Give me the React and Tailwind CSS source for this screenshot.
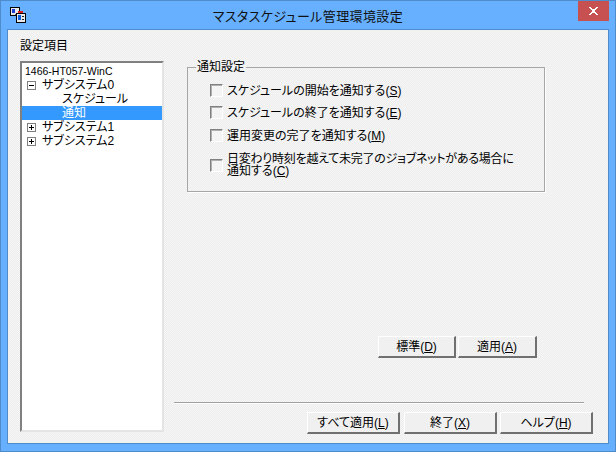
import React from 'react'

const font = { jp: "font-['Liberation_Sans','Noto_Sans_CJK_JP',sans-serif]" }

const dither =
  'bg-[#f1f1f1] bg-[repeating-conic-gradient(#ededed_0_25%,#f6f6f6_0_50%)] bg-[length:2px_2px]'

const Expander = ({ open }) => (
  <svg width="9" height="9" viewBox="0 0 9 9" className="shrink-0" shapeRendering="crispEdges">
    <rect x="0.5" y="0.5" width="8" height="8" fill="#fff" stroke="#808080" />
    <path d="M2 4.5H7" stroke="#000" />
    {!open && <path d="M4.5 2V7" stroke="#000" />}
  </svg>
)

const TreeRow = ({ label, expander, indent = 'pl-[5px]', selected, small }) => (
  <div
    className={`flex h-[14px] items-center leading-[14px] ${indent} ${small ? 'text-[10.5px]' : ''} ${
      selected ? 'bg-[#3399ff] text-white' : 'text-black'
    }`}
  >
    {expander && (
      <span className="mr-[6px]">
        <Expander open={expander === 'open'} />
      </span>
    )}
    {label}
  </div>
)

const Check = ({ children, className = '' }) => (
  <div className={`flex items-center ${className}`}>
    <span className="h-[13px] w-[13px] shrink-0 border border-t-[#808080] border-l-[#808080] border-r-white border-b-white bg-[#f4f4f4] shadow-[inset_1px_1px_0_#b0b0b0]" />
    <span className="ml-[4px] leading-[12px] text-black">{children}</span>
  </div>
)

const Key = ({ k }) => (
  <>
    (<span className="underline underline-offset-1">{k}</span>)
  </>
)

const Btn = ({ w, label, k }) => (
  <button
    className={`flex h-[22px] items-center justify-center border-t border-l border-t-white border-l-white border-r-2 border-b-2 border-r-[#707070] border-b-[#707070] bg-[#f0f0f0] text-black ${w}`}
  >
    {label}
    <Key k={k} />
  </button>
)

const AppIcon = () => (
  <svg width="16" height="16" viewBox="0 0 16 16" shapeRendering="crispEdges">
    <rect x="0.5" y="0.5" width="9" height="8" fill="#e8e8e8" stroke="#000" />
    <rect x="2" y="2" width="3" height="4" fill="#1c3fd8" />
    <rect x="5" y="6.5" width="4" height="1" fill="#555" />
    <rect x="6.5" y="6.5" width="9" height="9" fill="#e8e8e8" stroke="#000" />
    <rect x="8" y="8" width="3" height="5" fill="#1060e0" />
    <rect x="12" y="9" width="2" height="1" fill="#222" />
    <rect x="12" y="12" width="2" height="1" fill="#222" />
    <rect x="8" y="4" width="5" height="2" fill="#e02020" />
  </svg>
)

const App = () => {
  return (
    <div className={`flex h-[452px] w-[616px] flex-col border border-[#4f8ccb] bg-[#66b0ff] text-[12px] [font-feature-settings:'palt'] ${font.jp}`}>
      <div className="relative flex h-[28px] shrink-0 items-center pl-[9px]">
        <AppIcon />
        <div className="absolute inset-x-0 top-[7px] text-center text-[13px] leading-[18px] tracking-[0.4px] text-[#111]">
          マスタスケジュール管理環境設定
        </div>
        <div className="absolute right-[6px] top-0 flex h-[20px] w-[31px] items-center justify-center bg-[#c75050]">
          <svg width="9" height="8" viewBox="0 0 9 8" shapeRendering="crispEdges">
            <path d="M0 0h2v1h1v1h3V1h1V0h2v1H8v1H7v1H6v2h1v1h1v1h1v1H7V7H6V6H3v1H2v1H0V7h1V6h1V5h1V3H2V2H1V1H0z" fill="#fff" />
          </svg>
        </div>
      </div>

      <div className="mx-[6px] mb-[7px] flex-1 border border-[#4f8ccb]">
        <div className={`flex h-full ${dither}`}>
          {/* left column: tree */}
          <div className="flex w-[166px] shrink-0 flex-col pl-[12px] pt-[9px]">
            <div className="h-[22px] leading-[14px] text-black">設定項目</div>
            <div className="h-[371px] w-[144px] border-2 border-t-[#808080] border-l-[#808080] border-r-[#e4e4e4] border-b-[#e4e4e4] bg-white pt-[1px]">
              <TreeRow label="1466-HT057-WinC" indent="pl-[3px]" small />
              <TreeRow label="サブシステム0" expander="open" />
              <TreeRow label="スケジュール" indent="pl-[40px]" />
              <TreeRow label="通知" indent="pl-[40px]" selected />
              <TreeRow label="サブシステム1" expander="closed" />
              <TreeRow label="サブシステム2" expander="closed" />
            </div>
          </div>

          {/* right column */}
          <div className="flex flex-1 flex-col">
            <div className="relative ml-[13px] mt-[37px] h-[125px] w-[358px] border border-[#a6a6a6] shadow-[1px_1px_0_#fff]">
              <span className={`absolute left-[8px] top-[-8px] px-[1px] leading-[14px] text-black ${dither}`}>通知設定</span>
              <div className="flex flex-col pl-[22px] pt-[16px]">
                <Check>
                  スケジュールの開始を通知する<Key k="S" />
                </Check>
                <Check className="mt-[9px]">
                  スケジュールの終了を通知する<Key k="E" />
                </Check>
                <Check className="mt-[10px]">
                  運用変更の完了を通知する<Key k="M" />
                </Check>
                <Check className="mt-[11px]">
                  <span className="tracking-[-0.25px]">日変わり時刻を越えて未完了のジョブネットがある場合に</span>
                  <br />
                  通知する<Key k="C" />
                </Check>
              </div>
            </div>

            <div className="ml-[204px] mt-[144px] flex gap-[2px]">
              <Btn w="w-[78px]" label="標準" k="D" />
              <Btn w="w-[79px]" label="適用" k="A" />
            </div>

            <div className="mt-[44px] h-px w-[410px] bg-[#a0a0a0] shadow-[0_1px_0_#fff]" />

            <div className="ml-[133px] mt-[9px] flex">
              <Btn w="w-[93px] mr-[4px]" label="すべて適用" k="L" />
              <Btn w="w-[93px] mr-[3px]" label="終了" k="X" />
              <Btn w="w-[93px]" label="ヘルプ" k="H" />
            </div>
          </div>
        </div>
      </div>
    </div>
  )
}

export default App
